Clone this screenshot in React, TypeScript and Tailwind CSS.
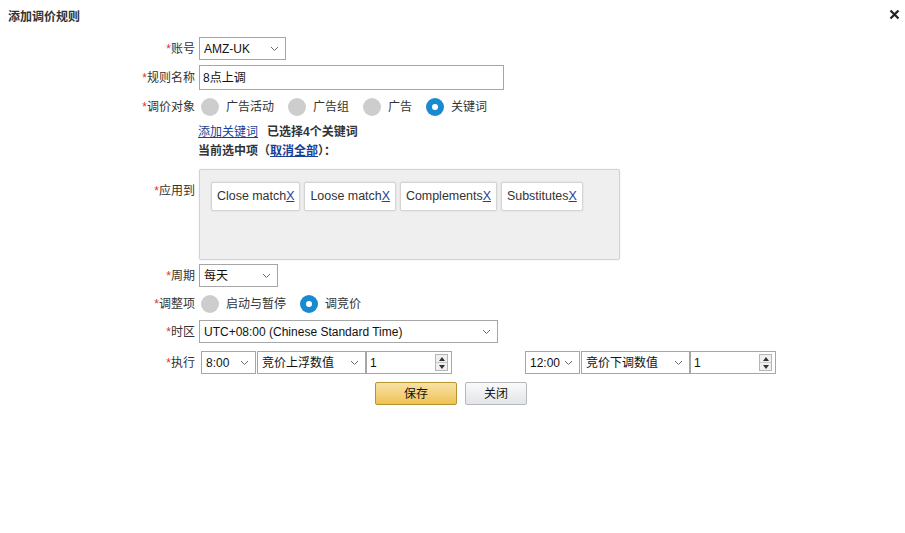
const font = { fontFamily: '"Liberation Sans", Arial, "Noto Sans CJK SC", sans-serif' };

function Chevron() {
  return (
    <svg width="9" height="6" viewBox="0 0 9 6" className="shrink-0">
      <path d="M1 1 L4.5 4.5 L8 1" fill="none" stroke="#6b6b6b" strokeWidth="1" />
    </svg>
  );
}

function Select({ value, className }: { value: string; className: string }) {
  return (
    <div className={`flex items-center justify-between border border-[#a6a6a6] bg-white pl-[4px] pr-[6px] text-[12px] text-[#111] ${className}`}>
      <span className="whitespace-nowrap">{value}</span>
      <Chevron />
    </div>
  );
}

function NumberInput({ className }: { className: string }) {
  return (
    <div className={`flex items-center justify-between border border-[#a6a6a6] bg-white pl-[3px] pr-[3px] text-[12px] text-[#111] ${className}`}>
      <span>1</span>
      <div className="flex h-[17px] w-[13px] flex-col border border-[#b5b5b5] bg-[#f0f0f0]">
        <div className="flex flex-1 items-center justify-center border-b border-[#c8c8c8]">
          <svg width="6" height="4" viewBox="0 0 6 4"><path d="M0 4 L3 0 L6 4Z" fill="#333" /></svg>
        </div>
        <div className="flex flex-1 items-center justify-center">
          <svg width="6" height="4" viewBox="0 0 6 4"><path d="M0 0 L3 4 L6 0Z" fill="#333" /></svg>
        </div>
      </div>
    </div>
  );
}

function Radio({ label, checked, className }: { label: string; checked?: boolean; className?: string }) {
  return (
    <div className={`flex items-center ${className ?? ""}`}>
      {checked ? (
        <span className="flex h-[18px] w-[18px] items-center justify-center rounded-full bg-[#1a8ad0]">
          <span className="h-[6px] w-[6px] rounded-full bg-white" />
        </span>
      ) : (
        <span className="h-[18px] w-[18px] rounded-full bg-[#cdcdcd]" />
      )}
      <span className="ml-[7px] text-[12px] text-[#333]">{label}</span>
    </div>
  );
}

function Label({ text, className }: { text: string; className?: string }) {
  return (
    <div className={`w-[197px] shrink-0 pr-[2px] text-right text-[12px] text-[#333] ${className ?? ""}`}>
      <span className="text-[#e0332a]">*</span>
      {text}
    </div>
  );
}

function Tag({ text, className }: { text: string; className: string }) {
  return (
    <div className={`flex h-[29px] items-center rounded-[2px] border border-[#d4d4d4] bg-white px-[5px] text-[12.45px] text-[#333] shadow-[0_0_2px_rgba(0,0,0,0.12)] ${className}`}>
      {text}
      <span className="text-[#1a3f96] underline">X</span>
    </div>
  );
}

export default function App() {
  return (
    <div className="relative h-[533px] w-[905px] bg-white" style={font}>
      <div className="flex items-center justify-between pl-[8px] pr-[5px] pt-[8px]">
        <span className="text-[12px] font-bold text-[#333]">添加调价规则</span>
        <svg width="11" height="11" viewBox="0 0 11 11" className="-mt-[6px]">
          <path d="M1.5 1.5 L9.5 9.5 M9.5 1.5 L1.5 9.5" stroke="#222" strokeWidth="2.2" />
        </svg>
      </div>

      <div className="mt-[11px] flex flex-col">
        <div className="flex h-[23px] items-center">
          <Label text="账号" />
          <Select value="AMZ-UK" className="ml-[2px] h-[23px] w-[87px]" />
        </div>

        <div className="mt-[5px] flex h-[25px] items-center">
          <Label text="规则名称" />
          <div className="ml-[2px] flex h-[25px] w-[305px] items-center border border-[#a6a6a6] pl-[3px] text-[12px] text-[#111]">8点上调</div>
        </div>

        <div className="mt-[8px] flex h-[18px] items-center">
          <Label text="调价对象" />
          <Radio label="广告活动" className="ml-[4px]" />
          <Radio label="广告组" className="ml-[14px]" />
          <Radio label="广告" className="ml-[14px]" />
          <Radio label="关键词" checked className="ml-[14px]" />
        </div>

        <div className="mt-[7px] flex h-[18px] items-center text-[12px]">
          <div className="w-[198px] shrink-0" />
          <span className="text-[#1a3f96] underline">添加关键词</span>
          <span className="ml-[9px] font-bold text-[#333]">已选择4个关键词</span>
        </div>

        <div className="mt-[1px] flex h-[18px] items-center text-[12px] font-bold text-[#333]">
          <div className="w-[198px] shrink-0" />
          <span>当前选中项（<span className="text-[#1a3f96] underline">取消全部</span>）：</span>
        </div>

        <div className="mt-[9px] flex items-start">
          <Label text="应用到" className="pt-[13px]" />
          <div className="ml-[2px] flex h-[91px] w-[421px] items-start rounded-[2px] border border-[#d2d2d2] bg-[#efefef] pl-[11px] pt-[12px] shadow-[0_0_2px_rgba(0,0,0,0.1)]">
            <Tag text="Close match" className="" />
            <Tag text="Loose match" className="ml-[4px]" />
            <Tag text="Complements" className="ml-[4px]" />
            <Tag text="Substitutes" className="ml-[4px]" />
          </div>
        </div>

        <div className="mt-[4px] flex h-[23px] items-center">
          <Label text="周期" />
          <Select value="每天" className="ml-[2px] h-[23px] w-[79px]" />
        </div>

        <div className="mt-[8px] flex h-[18px] items-center">
          <Label text="调整项" />
          <Radio label="启动与暂停" className="ml-[4px]" />
          <Radio label="调竞价" checked className="ml-[14px]" />
        </div>

        <div className="mt-[7px] flex h-[23px] items-center">
          <Label text="时区" />
          <Select value="UTC+08:00 (Chinese Standard Time)" className="ml-[2px] h-[23px] w-[299px]" />
        </div>

        <div className="mt-[8px] flex h-[23px] items-center">
          <Label text="执行" />
          <Select value="8:00" className="ml-[4px] h-[23px] w-[55px]" />
          <Select value="竞价上浮数值" className="ml-[1px] h-[23px] w-[109px]" />
          <NumberInput className="h-[23px] w-[86px]" />
          <Select value="12:00" className="ml-[73px] h-[23px] w-[55px]" />
          <Select value="竞价下调数值" className="ml-[1px] h-[23px] w-[109px]" />
          <NumberInput className="h-[23px] w-[86px]" />
        </div>

        <div className="mt-[8px] flex h-[23px] items-center">
          <div className="w-[375px] shrink-0" />
          <button className="flex h-[23px] w-[82px] items-center justify-center rounded-[2px] border border-[#b59431] bg-gradient-to-b from-[#f8e2a6] to-[#efc14f] text-[12px] text-[#111]">保存</button>
          <button className="ml-[8px] flex h-[23px] w-[62px] items-center justify-center rounded-[2px] border border-[#b5b8bd] bg-gradient-to-b from-[#fafafa] to-[#e3e5e8] text-[12px] text-[#111]">关闭</button>
        </div>
      </div>
    </div>
  );
}
